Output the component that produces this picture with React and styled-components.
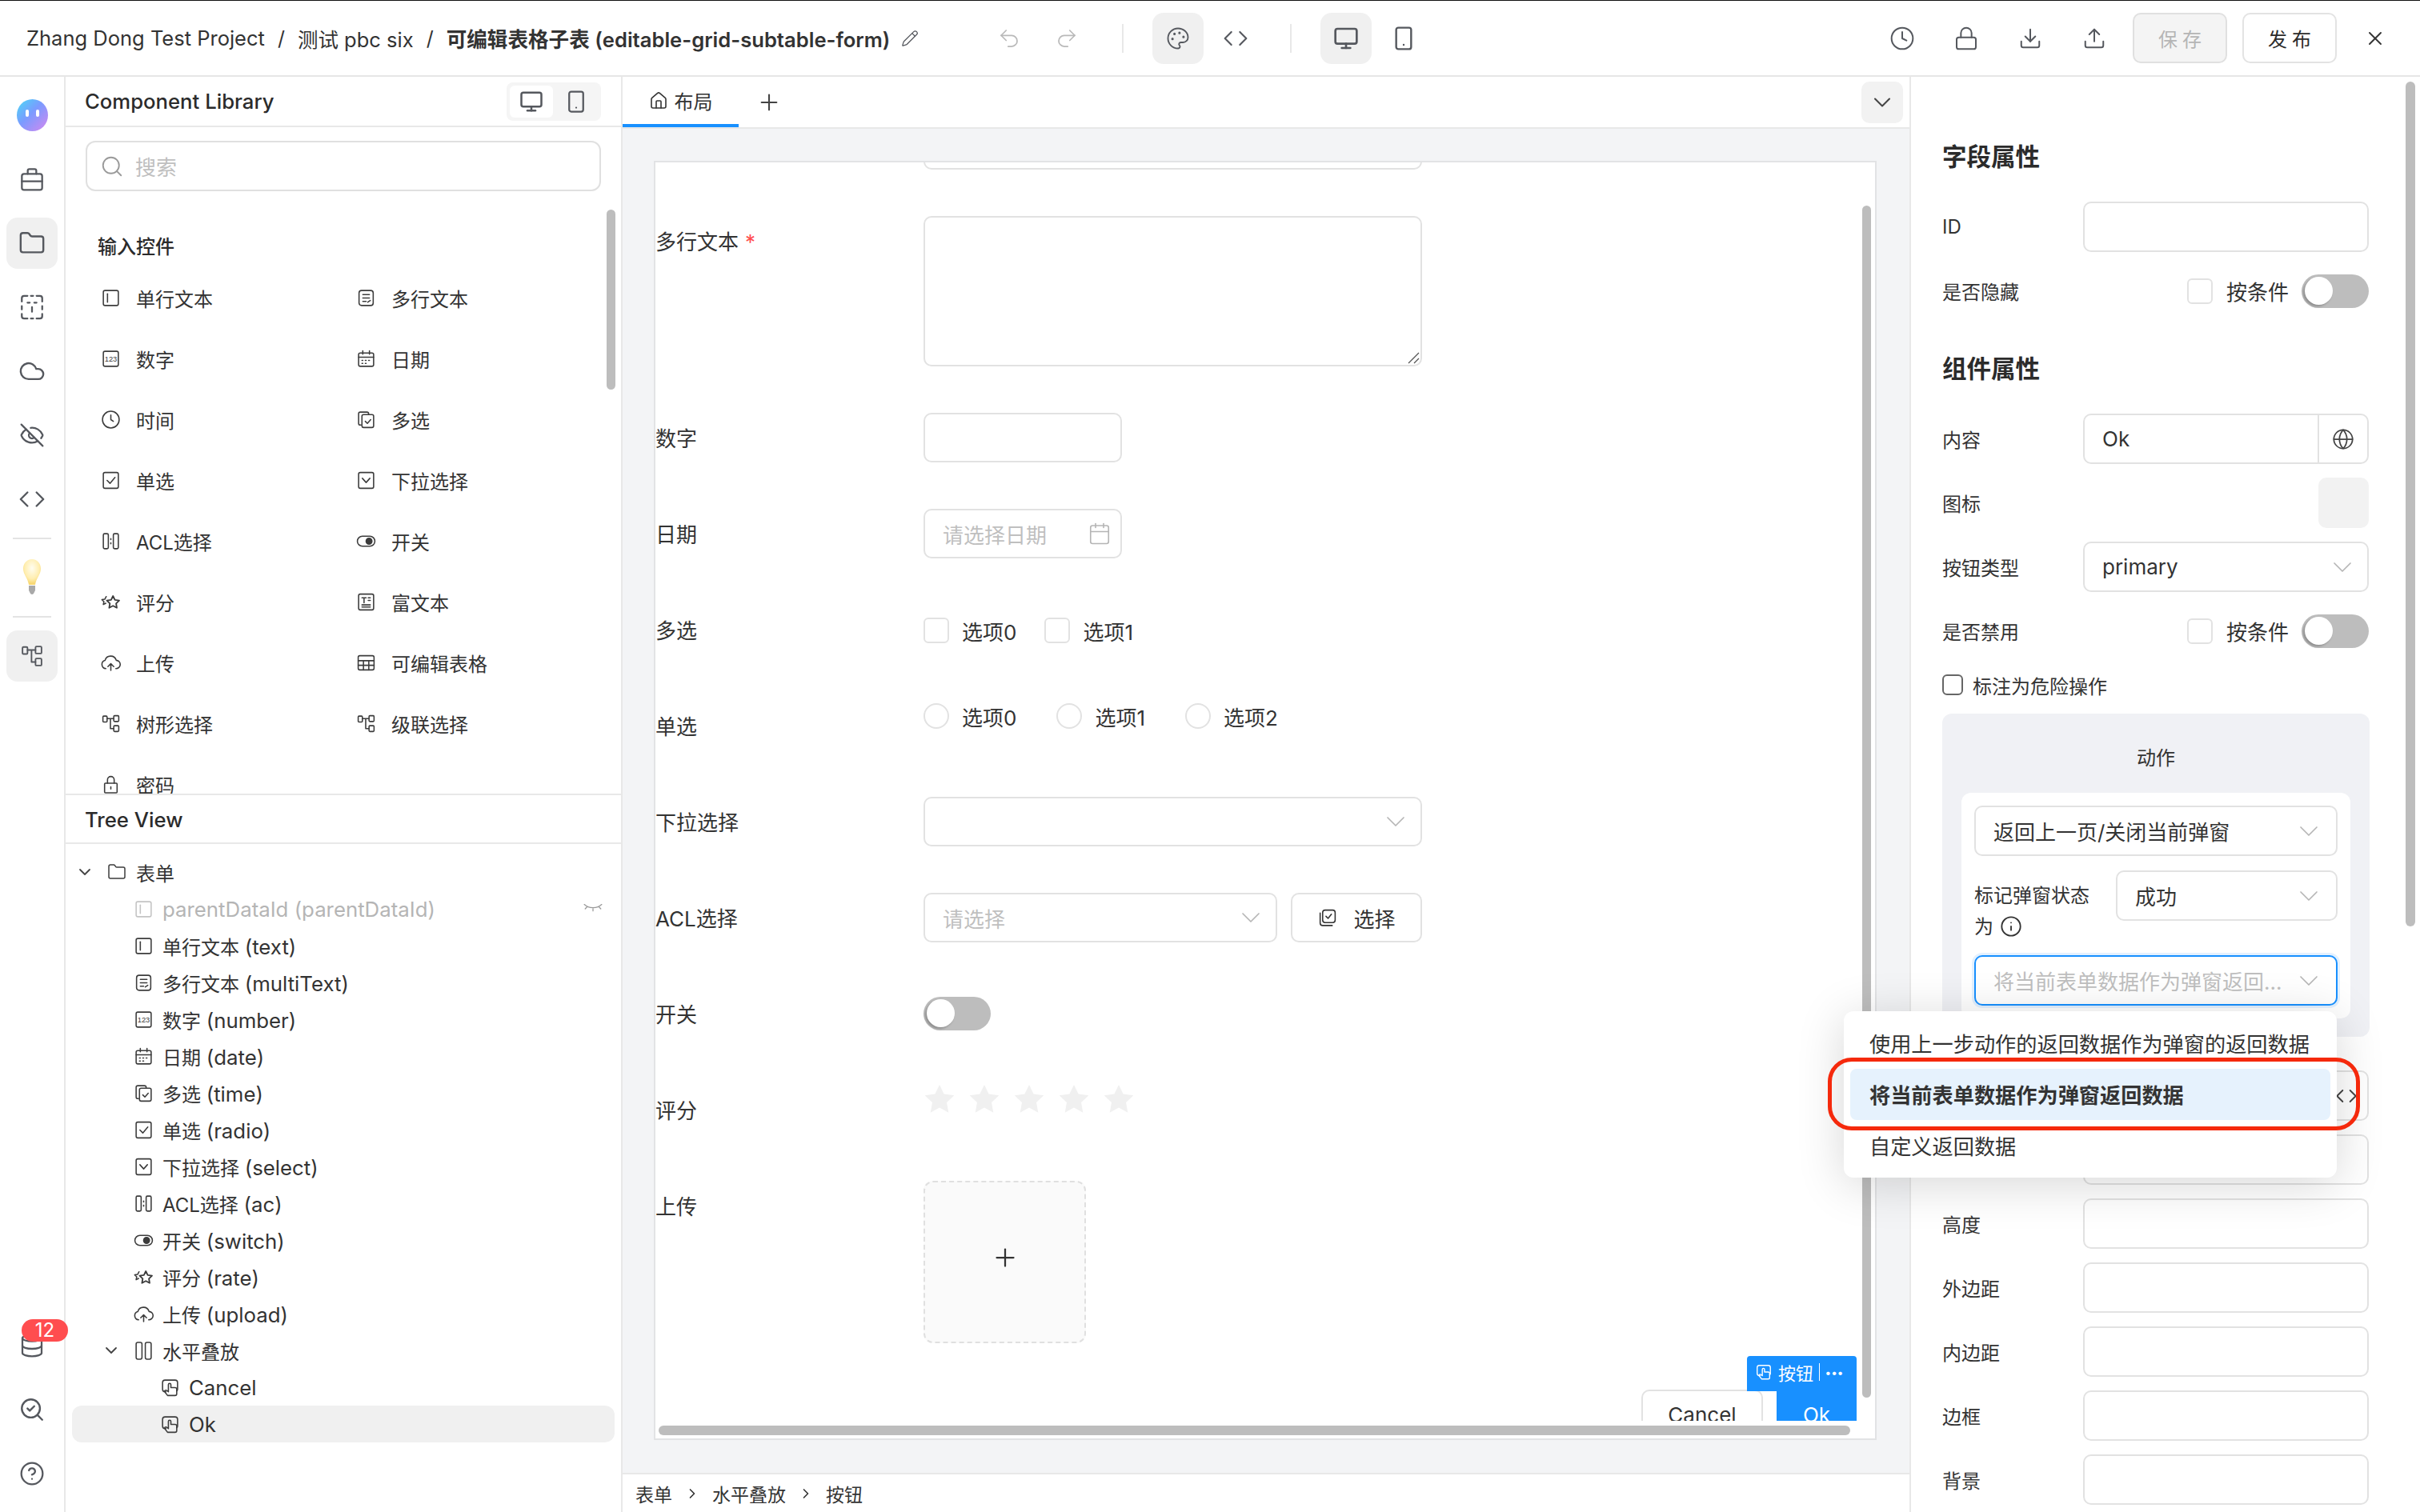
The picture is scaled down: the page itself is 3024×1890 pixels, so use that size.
import React from 'react';
import styled, { createGlobalStyle } from 'styled-components';
import {
  Folder, Cloud, EyeOff, Code, Database, SearchCheck, CircleHelp, Undo2, Redo2, Palette,
  Monitor, Smartphone, Pencil, Clock, Lock, Download, Upload, X, ChevronDown, ChevronRight, Plus,
  Home, Globe, Calendar, Info, Search,
} from 'lucide-react';

const FONT = `Inter, "Noto Sans CJK SC", "Noto Sans", sans-serif`;

const GlobalStyle = createGlobalStyle`
  html, body { margin: 0; padding: 0; background: #fff; }
  * { box-sizing: border-box; }
  body { font-family: ${FONT}; font-size: 24px; color: #333; }
`;

const Page = styled.div`
  position: relative;
  width: 3024px;
  height: 1890px;
  overflow: hidden;
  display: flex;
  flex-direction: column;
  border-top: 1px solid #111;
`;

/* top bar */
const Header = styled.header`
  height: 95px;
  flex: none;
  display: flex;
  align-items: center;
  padding: 0 0 0 33px;
  border-bottom: 2px solid #e6e6e6;
`;
const Crumb = styled.span`
  font-size: ${p => (p.$strong ? 25.6 : 25.5)}px;
  font-weight: ${p => (p.$strong ? 600 : 400)};
  color: #333;
  white-space: nowrap;
`;
const Slash = styled.span`
  font-size: 25px;
  margin: 0 16px;
  color: #333;
`;
const PlainIcon = styled.span`
  display: flex;
  align-items: center;
  justify-content: center;
  color: ${p => p.$color || '#55585e'};
  flex: none;
`;
const PencilIcon = styled(PlainIcon)`
  margin-left: 14px;
`;
const HistoryGroup = styled.div`
  display: flex;
  align-items: center;
  gap: 42px;
  margin-left: 98px;
`;
const VBar = styled.div`
  width: 2px;
  height: 36px;
  background: #e8e8e8;
  margin: 0 36px 0 ${p => p.$left || 36}px;
`;
const TopButton = styled.div`
  width: 64px;
  height: 64px;
  border-radius: 14px;
  display: flex;
  align-items: center;
  justify-content: center;
  color: #55585e;
  background: ${p => (p.$on ? '#f0f0f0' : 'transparent')};
`;
const ButtonPair = styled.div`
  display: flex;
  gap: 8px;
`;
const TopTools = styled.div`
  display: flex;
  align-items: center;
  gap: 16px;
  margin-left: auto;
  margin-right: 16px;
`;
const FlatButton = styled.div`
  width: 118px;
  height: 63px;
  border-radius: 10px;
  border: 2px solid ${p => (p.$disabled ? '#e0e0e0' : '#e3e3e3')};
  background: ${p => (p.$disabled ? '#f4f4f4' : '#fff')};
  color: ${p => (p.$disabled ? '#b5b5b5' : '#2b2b2b')};
  display: flex;
  align-items: center;
  justify-content: center;
  font-size: 24px;
  letter-spacing: 6px;
  padding-left: 6px;
`;
const ActionButtons = styled.div`
  display: flex;
  align-items: center;
  gap: 19px;
`;
const CloseIcon = styled(PlainIcon)`
  margin: 0 42px 0 34px;
  color: #333;
`;

const Body = styled.div`
  flex: 1;
  min-height: 0;
  display: flex;
`;

/* icon rail */
const Rail = styled.nav`
  width: 82px;
  flex: none;
  border-right: 2px solid #e8e8e8;
  display: flex;
  flex-direction: column;
  align-items: center;
  gap: 16px;
  padding: 16px 0 16px;
`;
const RailItem = styled.div`
  position: relative;
  width: 64px;
  height: 64px;
  border-radius: 14px;
  flex: none;
  display: flex;
  align-items: center;
  justify-content: center;
  color: #55585e;
  background: ${p => (p.$on ? '#f0f0f0' : 'transparent')};
`;
const RailLine = styled.div`
  width: 48px;
  height: 2px;
  flex: none;
  background: #e4e4e4;
`;
const RailBottom = styled.div`
  margin-top: auto;
  display: flex;
  flex-direction: column;
  gap: 16px;
`;
const Avatar = styled.div`
  width: 39px;
  height: 40px;
  border-radius: 50%;
  background: linear-gradient(135deg, #4fd3f7 5%, #7b9bff 45%, #c58bf2 90%);
  display: flex;
  justify-content: center;
  gap: 9px;
  padding-top: 13px;
`;
const AvatarEye = styled.span`
  width: 4px;
  height: 9px;
  border-radius: 2px;
  background: #fff;
`;
const CountBadge = styled.span`
  position: absolute;
  top: -1px;
  left: 19px;
  width: 58px;
  height: 28px;
  border-radius: 14px;
  background: #ff4d4f;
  color: #fff;
  font-size: 24px;
  line-height: 28px;
  text-align: center;
`;

/* left column */
const LeftPanel = styled.aside`
  width: 696px;
  flex: none;
  border-right: 2px solid #e8e8e8;
  display: flex;
  flex-direction: column;
`;
const PanelHead = styled.div`
  height: 63px;
  flex: none;
  display: flex;
  align-items: center;
  justify-content: space-between;
  padding: 0 25px 0 24px;
  border-bottom: 2px solid #e8e8e8;
`;
const PanelTitle = styled.h2`
  margin: 0;
  font-size: 25.7px;
  font-weight: 500;
  color: #2b2b2b;
`;
const Toggle = styled.div`
  width: 118px;
  height: 48px;
  padding: 4px;
  border-radius: 8px;
  background: #f5f5f5;
  display: flex;
  gap: 2px;
`;
const ToggleItem = styled.div`
  flex: 1;
  border-radius: 6px;
  display: flex;
  align-items: center;
  justify-content: center;
  color: #55585e;
  background: ${p => (p.$on ? '#fff' : 'transparent')};
`;
const Library = styled.div`
  position: relative;
  height: 835px;
  flex: none;
  overflow: hidden;
  padding-top: 17px;
  border-bottom: 2px solid #e8e8e8;
`;
const SearchBox = styled.div`
  height: 63px;
  margin: 0 25px;
  padding: 0 16px;
  border: 2px solid #e0e0e0;
  border-radius: 12px;
  display: flex;
  align-items: center;
  gap: 14px;
  color: #9a9a9a;
  font-size: 26px;
`;
const Placeholder = styled.span`
  color: #bfbfbf;
  white-space: nowrap;
`;
const SectionTitle = styled.div`
  margin: 46px 0 1px 40px;
  height: 48px;
  line-height: 48px;
  font-weight: 500;
  color: #2b2b2b;
`;
const WidgetGrid = styled.div`
  display: grid;
  grid-template-columns: 319px 1fr;
  grid-auto-rows: 76px;
  padding-left: 44px;
`;
const Widget = styled.div`
  display: flex;
  align-items: center;
  gap: 19px;
  color: #333;
  white-space: nowrap;
  & > svg { color: #3c3c3c; }
`;
const ScrollThumb = styled.div`
  position: absolute;
  top: ${p => p.$top}px;
  right: ${p => p.$right}px;
  width: ${p => p.$w}px;
  height: ${p => p.$h}px;
  border-radius: 6px;
  background: #bdbdbd;
`;
const TreeHead = styled.div`
  height: 61px;
  flex: none;
  display: flex;
  align-items: center;
  padding: 2px 24px 0;
  border-bottom: 2px solid #e8e8e8;
`;
const Tree = styled.div`
  padding-top: 12px;
`;
const TreeRow = styled.div`
  height: 46px;
  margin: 0 8px;
  padding-left: ${p => p.$level * 33}px;
  display: flex;
  align-items: center;
  gap: 12px;
  border-radius: 12px;
  color: ${p => (p.$muted ? '#b5b5b5' : '#333')};
  background: ${p => (p.$on ? '#f0f0f0' : 'transparent')};
  white-space: nowrap;
`;
const Latin = styled.span`
  font-size: 25.8px;
`;
const Caret = styled.span`
  width: 32px;
  flex: none;
  display: flex;
  justify-content: center;
  color: #444;
`;
const TreeIcon = styled.span`
  width: 24px;
  flex: none;
  display: flex;
  justify-content: center;
  color: ${p => (p.$muted ? '#c4c4c4' : '#3c3c3c')};
`;
const LeafPad = styled.span`
  width: 32px;
  flex: none;
`;
const RowEnd = styled.span`
  margin-left: auto;
  margin-right: 14px;
  display: flex;
  color: #9a9a9a;
`;

/* center */
const Center = styled.main`
  flex: 1;
  min-width: 0;
  display: flex;
  flex-direction: column;
`;
const TabBar = styled.div`
  height: 65px;
  flex: none;
  display: flex;
  align-items: center;
  border-bottom: 2px solid #e8e8e8;
`;
const Tab = styled.div`
  width: 145px;
  height: 63px;
  display: flex;
  align-items: center;
  justify-content: center;
  gap: 8px;
  color: #333;
  border-bottom: 4px solid #1890ff;
`;
const AddTab = styled(PlainIcon)`
  margin-left: 22px;
  color: #444;
`;
const CollapseButton = styled.div`
  margin-left: auto;
  margin-right: 8px;
  width: 52px;
  height: 52px;
  border-radius: 10px;
  background: #f2f2f2;
  color: #444;
  display: flex;
  align-items: center;
  justify-content: center;
`;
const CanvasArea = styled.div`
  flex: 1;
  min-height: 0;
  background: #f3f4f6;
  padding: 40px 41px 41px 39px;
  display: flex;
`;
const Canvas = styled.div`
  position: relative;
  flex: 1;
  background: #fff;
  border: 2px solid #e2e3e5;
  overflow: hidden;
`;
const FormView = styled.div`
  height: 1573px;
  overflow: hidden;
`;
const Form = styled.div`
  margin-top: -53px;
  display: flex;
  flex-direction: column;
  gap: 58px;
`;
const FormRow = styled.div`
  display: grid;
  grid-template-columns: 335px 623px;
`;
const FormLabel = styled.div`
  height: 62px;
  line-height: 65px;
  font-size: 26px;
  color: #333;
`;
const Required = styled.span`
  color: #ff4d4f;
  margin-left: 8px;
`;
const Field = styled.div`
  height: ${p => p.$h || 62}px;
  width: ${p => p.$w || '100%'};
  border: 2px solid #e2e2e2;
  border-radius: 10px;
  background: #fff;
  position: relative;
  display: flex;
  align-items: center;
  justify-content: space-between;
  padding: 0 11px 0 22px;
  flex: ${p => (p.$grow ? 1 : 'none')};
  font-size: 26px;
  color: #333;
  white-space: nowrap;
`;
const ResizeGrip = styled.svg`
  position: absolute;
  right: 1px;
  bottom: 1px;
`;
const ChoiceRow = styled.div`
  height: 32px;
  margin-top: ${p => p.$top}px;
  display: flex;
  align-items: center;
`;
const Choice = styled.div`
  display: flex;
  align-items: center;
  gap: 16px;
  margin-right: ${p => p.$gap}px;
  white-space: nowrap;
  font-size: 26px;
  color: #333;
`;
const Box = styled.span`
  width: ${p => p.$size || 32}px;
  height: ${p => p.$size || 32}px;
  flex: none;
  border: 2px solid ${p => (p.$dark ? '#666' : '#e2e2e2')};
  border-radius: ${p => (p.$round ? '50%' : '6px')};
  background: #fff;
`;
const Inline = styled.div`
  display: flex;
  gap: 17px;
`;
const PickButton = styled.div`
  width: 164px;
  height: 62px;
  border: 2px solid #e2e2e2;
  border-radius: 10px;
  display: flex;
  align-items: center;
  justify-content: center;
  gap: 20px;
  font-size: 26px;
  color: #333;
`;
const SwitchTrack = styled.div`
  width: 84px;
  height: 42px;
  margin-top: ${p => p.$top || 0}px;
  border-radius: 21px;
  background: #bdbdbd;
  padding: 3px 4px;
  flex: none;
`;
const SwitchKnob = styled.div`
  width: 35px;
  height: 35px;
  border-radius: 50%;
  background: #fff;
  box-shadow: -2px 2px 3px rgba(0, 0, 0, 0.25);
`;
const Stars = styled.div`
  display: flex;
  gap: 16px;
  margin-top: -2px;
  height: 40px;
`;
const UploadBox = styled.div`
  width: 203px;
  height: 203px;
  padding-bottom: 12px;
  border: 2px dashed #e0e0e0;
  border-radius: 12px;
  background: #fafafa;
  display: flex;
  align-items: center;
  justify-content: center;
  color: #333;
`;
const ButtonRow = styled.div`
  display: flex;
  justify-content: flex-end;
  gap: 17px;
  padding-right: 23px;
`;
const FormButton = styled.div`
  position: relative;
  width: ${p => p.$w}px;
  height: 62px;
  border: 2px solid ${p => (p.$primary ? '#1890ff' : '#e2e2e2')};
  border-radius: ${p => (p.$primary ? '0' : '10px')};
  background: ${p => (p.$primary ? '#1890ff' : '#fff')};
  color: ${p => (p.$primary ? '#fff' : '#333')};
  font-size: 26px;
  display: flex;
  align-items: center;
  justify-content: center;
`;
const SelectTag = styled.div`
  position: absolute;
  right: -2px;
  bottom: 100%;
  width: 137px;
  height: 44px;
  padding: 0 0 4px 10px;
  background: #1890ff;
  color: #fff;
  border-radius: 4px 4px 0 0;
  font-size: 22px;
  display: flex;
  align-items: center;
  gap: 7px;
  white-space: nowrap;
`;
const TagBar = styled.span`
  width: 1px;
  height: 22px;
  background: #fff;
`;
const TagDots = styled.span`
  font-size: 14px;
  letter-spacing: 1px;
  font-weight: 700;
`;
const HScroll = styled.div`
  position: absolute;
  left: 4px;
  bottom: 4px;
  width: 1489px;
  height: 12px;
  border-radius: 6px;
  background: #bdbdbd;
`;
const BreadBar = styled.div`
  height: 49px;
  flex: none;
  border-top: 2px solid #e8e8e8;
  display: flex;
  align-items: center;
  padding-left: 16px;
  font-size: 23px;
  color: #333;
`;
const BreadArrow = styled(PlainIcon)`
  margin: 0 15px;
  color: #333;
`;

/* right column */
const RightPanel = styled.aside`
  position: relative;
  width: 638px;
  flex: none;
  border-left: 2px solid #e8e8e8;
  padding: 34px 64px 0 39px;
  overflow: hidden;
`;
const PropTitle = styled.h3`
  margin: 42px 0 32px;
  height: 48px;
  line-height: 48px;
  font-size: 30.5px;
  font-weight: 600;
  color: #2b2b2b;
`;
const PropRow = styled.div`
  display: grid;
  grid-template-columns: 176px 1fr;
  align-items: center;
  height: 63px;
  margin-bottom: 17px;
  white-space: nowrap;
`;
const PropLabel = styled.span`
  color: #333;
`;
const RowRight = styled.div`
  display: flex;
  align-items: center;
  justify-content: flex-end;
`;
const ConditionText = styled.span`
  margin: 0 16px 0 17px;
  font-size: 26px;
  color: #333;
`;
const Addon = styled.span`
  position: absolute;
  right: 0;
  top: 0;
  bottom: 0;
  width: 62px;
  border-left: 2px solid #e2e2e2;
  display: flex;
  align-items: center;
  justify-content: center;
  color: #444;
`;
const IconSlot = styled.div`
  width: 63px;
  height: 63px;
  border-radius: 10px;
  background: #f2f2f2;
`;
const DangerRow = styled.div`
  height: 38px;
  margin-bottom: 17px;
  display: flex;
  align-items: center;
  gap: 12px;
  color: #333;
`;
const ActionPanel = styled.div`
  width: 534px;
  height: 404px;
  margin-bottom: 42px;
  padding: 32px 24px 23px 24px;
  border-radius: 12px;
  background: #f0f1f5;
`;
const ActionTitle = styled.div`
  height: 48px;
  line-height: 48px;
  text-align: center;
  margin-bottom: 19px;
  color: #333;
`;
const ActionCard = styled.div`
  height: 282px;
  padding: 16px;
  border-radius: 12px;
  background: #fff;
  display: flex;
  flex-direction: column;
`;
const Select = styled(Field)`
  height: 63px;
  padding: 0 14px 0 22px;
  flex: none;
  border-color: ${p => (p.$focus ? '#1890ff' : '#e2e2e2')};
  box-shadow: ${p => (p.$focus ? '0 0 0 3px #e3f1ff' : 'none')};
`;
const StatusRow = styled.div`
  display: grid;
  grid-template-columns: 177px 1fr;
  margin: 18px 0 16px;
`;
const StatusLabel = styled.div`
  padding-top: 12px;
  line-height: 39px;
  height: 90px;
  color: #333;
`;
const InfoIcon = styled.span`
  display: inline-flex;
  vertical-align: -5px;
  margin-left: 8px;
  color: #333;
`;
const SelectArrow = styled(PlainIcon)`
  color: #b5b5b5;
`;
const SuffixIcon = styled(PlainIcon)`
  margin-right: 1px;
  color: #444;
`;

/* dropdown over the property panel */
const Dropdown = styled.div`
  position: absolute;
  left: 2304px;
  top: 1263px;
  width: 616px;
  height: 208px;
  padding: 8px;
  border-radius: 12px;
  background: #fff;
  box-shadow: 0 8px 60px rgba(0, 0, 0, 0.16);
  display: flex;
  flex-direction: column;
`;
const DropItem = styled.div`
  height: 64px;
  padding-left: 24px;
  flex: none;
  display: flex;
  align-items: center;
  border-radius: 8px;
  font-size: 26.2px;
  font-weight: ${p => (p.$on ? 600 : 400)};
  background: ${p => (p.$on ? '#e6f2fd' : 'transparent')};
  color: #333;
  white-space: nowrap;
`;
const RedMark = styled.div`
  position: absolute;
  left: -20px;
  top: 58px;
  width: 665px;
  height: 91px;
  border: 5px solid #f5290c;
  border-radius: 30px;
  pointer-events: none;
`;

const Glyph = styled.svg`
  width: ${p => p.$size || 25}px;
  height: ${p => p.$size || 25}px;
  fill: none;
  stroke: currentColor;
  stroke-width: ${p => p.$weight || 1.5};
  stroke-linecap: round;
  stroke-linejoin: round;
  flex: none;
`;

const STAR = 'M8 1.5l1.9 3.9 4.3.6-3.1 3 .7 4.3L8 11.3l-3.8 2 .7-4.3-3.1-3 4.3-.6z';

const glyphs = {
  text: <><rect x="3" y="3" width="18" height="18" rx="2" /><path d="M8 7v10" /></>,
  multi: <><rect x="3.5" y="3" width="17" height="18" rx="3" /><path d="M8 8h8M8 12h8M8 16h4M14 17l3-2" /></>,
  number: <><rect x="3" y="3" width="18" height="18" rx="2" /><text x="12" y="15.5" fontSize="9" textAnchor="middle" fill="currentColor" stroke="none" fontFamily="Liberation Sans">123</text></>,
  date: <><rect x="3" y="5" width="18" height="16" rx="2" /><path d="M3 10h18M8 2.5v4M16 2.5v4M7 14h1M11 14h1M15 14h1M7 17.5h1M11 17.5h1" /></>,
  clock: <><circle cx="12" cy="12" r="10" /><path d="M12 6.5V12l3 2" /></>,
  multiCheck: <><path d="M6 18.5H5a2 2 0 0 1-2-2V5a2 2 0 0 1 2-2h8a2 2 0 0 1 2 2v1" /><rect x="7" y="6" width="14" height="15.5" rx="2" /><path d="M11 14l2.5 2.5 4-4.5" /></>,
  radio: <><rect x="3" y="2.5" width="18" height="19" rx="2" /><path d="M7.5 12l3.5 3.5 6-7" /></>,
  select: <><rect x="3" y="2.5" width="18" height="19" rx="2" /><path d="M7.5 9.5L12 14.5l4.5-5" /></>,
  acl: <><rect x="3" y="3" width="6" height="18" rx="1.5" /><rect x="15" y="3" width="6" height="18" rx="1.5" /><path d="M12 9v1M12 14v1" /></>,
  toggle: <><rect x="1.5" y="6" width="21" height="12" rx="6" /><circle cx="15.5" cy="12" r="3.5" fill="currentColor" /></>,
  rate: <><path d={STAR} transform="translate(5 3) scale(1.2)" /><path d="M6 13.5L3 15l.7-3.5-2.4-2.3 3.4-.5L6.5 5.5" /></>,
  rich: <><rect x="3" y="2.5" width="18" height="19" rx="2" /><path d="M7 7h5M9.5 7v6M14.5 7H17M14.5 10H17M7 15.5h10M7 18h10" /></>,
  cloudUp: <><path d="M12 13v8M8.5 16.5L12 13l3.5 3.5" /><path d="M6 19a5 5 0 0 1-1-9.8A7 7 0 0 1 18.5 9 5 5 0 0 1 18 19" /></>,
  table: <><rect x="2.5" y="3.5" width="19" height="17" rx="2" /><path d="M2.5 9.5h19M2.5 15h19M8.8 9.5v11M15.2 9.5v11" /></>,
  tree: <><rect x="2.5" y="3" width="5" height="7" rx="1" /><rect x="15.5" y="2.5" width="6" height="7" rx="1" /><rect x="15.5" y="14.5" width="6" height="7" rx="1" /><path d="M7.5 6h8M11.5 6v12h4" /></>,
  lock: <><rect x="4.5" y="10.5" width="15" height="11.5" rx="1" /><path d="M8 10.5V6.5a4 4 0 0 1 8 0v4M12 15v2.5" /></>,
  hstack: <><rect x="3" y="2" width="7" height="20" rx="2" /><rect x="14" y="2" width="7" height="20" rx="2" /></>,
  button: <><path d="M7 17H6a3 3 0 0 1-3-3V6a3 3 0 0 1 3-3h12a3 3 0 0 1 3 3v8a3 3 0 0 1-1 2" /><path d="M9 21.5l-3-4a1.4 1.4 0 0 1 2-2l2 1.5V8.5a1.5 1.5 0 0 1 3 0V12h5a2 2 0 0 1 2 2v5.5a2 2 0 0 1-2 2z" /></>,
  lash: <><path d="M2 7c5 5 15 5 20 0M5 10l-2 2M12 12v2.5M19 10l2 2" /></>,
  pick: <><path d="M3.5 6v12a3 3 0 0 0 3 3H18" /><rect x="6.5" y="2.5" width="15" height="15" rx="3" /><path d="M10.5 10l2.5 2.5 4-5" /></>,
  case: <><rect x="2.5" y="7" width="19" height="15" rx="2" /><path d="M2.5 14h19M8 7V4a1.5 1.5 0 0 1 1.5-1.5h5A1.5 1.5 0 0 1 16 4v3" /></>,
  dashed: <><path d="M3 7V4a2 2 0 0 1 2-2h3M11 2h2M16 2h3a2 2 0 0 1 2 2v3M3 11v3M21 11v3M3 18v2a2 2 0 0 0 2 2h3M11 22h2M16 22h3a2 2 0 0 0 2-2v-2M8 8h2M14 8h2M12 12v4" /></>,
};

const Ico = ({ name, size, weight }) => (
  <Glyph viewBox="0 0 24 24" $size={size} $weight={weight}>{glyphs[name]}</Glyph>
);

const Bulb = () => (
  <svg width="26" height="48" viewBox="0 0 26 48">
    <defs>
      <radialGradient id="bulbGlow" cx="50%" cy="35%" r="60%">
        <stop offset="0%" stopColor="#fffdf0" />
        <stop offset="70%" stopColor="#ffeeb0" />
        <stop offset="100%" stopColor="#f8d873" />
      </radialGradient>
    </defs>
    <path d="M13 1C6 1 2 7 2 13c0 7 6 12 7 20h8c1-8 7-13 7-20C24 7 20 1 13 1z" fill="url(#bulbGlow)" />
    <path d="M9 34h8v6l-2 4a3 3 0 0 1-4 0l-2-4z" fill="#a9a9a9" />
  </svg>
);

const ArrowDown = () => (
  <SelectArrow><ChevronDown size={40} strokeWidth={1} /></SelectArrow>
);

const Star = () => (
  <svg width="40" height="40" viewBox="0 0 40 40">
    <path d="M20 2l5.6 11.6 12.7 1.7-9.3 8.8 2.3 12.6L20 30.6 8.7 36.7 11 24.1 1.7 15.3l12.7-1.7z" fill="#f0f0f0" />
  </svg>
);

const WIDGETS = [
  ['text', '单行文本'], ['multi', '多行文本'], ['number', '数字'], ['date', '日期'],
  ['clock', '时间'], ['multiCheck', '多选'], ['radio', '单选'], ['select', '下拉选择'],
  ['acl', 'ACL选择'], ['toggle', '开关'], ['rate', '评分'], ['rich', '富文本'],
  ['cloudUp', '上传'], ['table', '可编辑表格'], ['tree', '树形选择'], ['tree', '级联选择'],
  ['lock', '密码'],
];

const TREE_FIELDS = [
  ['text', '单行文本', '(text)'], ['multi', '多行文本', '(multiText)'], ['number', '数字', '(number)'],
  ['date', '日期', '(date)'], ['multiCheck', '多选', '(time)'], ['radio', '单选', '(radio)'],
  ['select', '下拉选择', '(select)'], ['acl', 'ACL选择', '(ac)'], ['toggle', '开关', '(switch)'],
  ['rate', '评分', '(rate)'], ['cloudUp', '上传', '(upload)'],
];

const STYLE_ROWS = ['', '', '高度', '外边距', '内边距', '边框', '背景'];

const Condition = () => (
  <RowRight>
    <Box />
    <ConditionText>按条件</ConditionText>
    <SwitchTrack><SwitchKnob /></SwitchTrack>
  </RowRight>
);

export default function App() {
  return (
    <Page>
      <GlobalStyle />
      <Header>
        <Crumb>Zhang Dong Test Project</Crumb>
        <Slash>/</Slash>
        <Crumb>测试 pbc six</Crumb>
        <Slash>/</Slash>
        <Crumb $strong>可编辑表格子表 (editable-grid-subtable-form)</Crumb>
        <PencilIcon><Pencil size={22} strokeWidth={1.4} /></PencilIcon>
        <HistoryGroup>
          <PlainIcon $color="#b9b9b9"><Undo2 size={30} strokeWidth={1.4} /></PlainIcon>
          <PlainIcon $color="#b9b9b9"><Redo2 size={30} strokeWidth={1.4} /></PlainIcon>
        </HistoryGroup>
        <VBar $left={54} />
        <ButtonPair>
          <TopButton $on><Palette size={30} strokeWidth={1.5} /></TopButton>
          <TopButton><Code size={32} strokeWidth={1.6} /></TopButton>
        </ButtonPair>
        <VBar />
        <ButtonPair>
          <TopButton $on><Monitor size={32} strokeWidth={2} /></TopButton>
          <TopButton><Smartphone size={32} strokeWidth={1.8} /></TopButton>
        </ButtonPair>
        <TopTools>
          <TopButton><Clock size={32} strokeWidth={1.5} /></TopButton>
          <TopButton><Lock size={32} strokeWidth={1.5} /></TopButton>
          <TopButton><Download size={30} strokeWidth={1.6} /></TopButton>
          <TopButton><Upload size={30} strokeWidth={1.6} /></TopButton>
        </TopTools>
        <ActionButtons>
          <FlatButton $disabled>保存</FlatButton>
          <FlatButton>发布</FlatButton>
        </ActionButtons>
        <CloseIcon><X size={28} strokeWidth={1.6} /></CloseIcon>
      </Header>

      <Body>
        <Rail>
          <RailItem><Avatar><AvatarEye /><AvatarEye /></Avatar></RailItem>
          <RailItem><Ico name="case" size={32} weight={1.7} /></RailItem>
          <RailItem $on><Folder size={34} strokeWidth={1.7} /></RailItem>
          <RailItem><Ico name="dashed" size={34} weight={1.6} /></RailItem>
          <RailItem><Cloud size={34} strokeWidth={1.7} /></RailItem>
          <RailItem><EyeOff size={32} strokeWidth={1.7} /></RailItem>
          <RailItem><Code size={34} strokeWidth={1.7} /></RailItem>
          <RailLine />
          <RailItem><Bulb /></RailItem>
          <RailLine />
          <RailItem $on><Ico name="tree" size={30} /></RailItem>
          <RailBottom>
            <RailItem>
              <Database size={32} strokeWidth={1.7} />
              <CountBadge>12</CountBadge>
            </RailItem>
            <RailItem><SearchCheck size={34} strokeWidth={1.7} /></RailItem>
            <RailItem><CircleHelp size={32} strokeWidth={1.7} /></RailItem>
          </RailBottom>
        </Rail>

        <LeftPanel>
          <PanelHead>
            <PanelTitle>Component Library</PanelTitle>
            <Toggle>
              <ToggleItem $on><Monitor size={30} strokeWidth={2} /></ToggleItem>
              <ToggleItem><Smartphone size={30} strokeWidth={1.8} /></ToggleItem>
            </Toggle>
          </PanelHead>
          <Library>
            <SearchBox>
              <Search size={30} strokeWidth={1.5} />
              <Placeholder>搜索</Placeholder>
            </SearchBox>
            <SectionTitle>输入控件</SectionTitle>
            <WidgetGrid>
              {WIDGETS.map(([icon, label]) => (
                <Widget key={label}><Ico name={icon} />{label}</Widget>
              ))}
            </WidgetGrid>
            <ScrollThumb $top={103} $right={7} $w={11} $h={225} />
          </Library>
          <TreeHead><PanelTitle>Tree View</PanelTitle></TreeHead>
          <Tree>
            <TreeRow $level={0}>
              <Caret><ChevronDown size={24} strokeWidth={1.8} /></Caret>
              <TreeIcon><Folder size={26} strokeWidth={1.5} /></TreeIcon>
              表单
            </TreeRow>
            <TreeRow $level={1} $muted>
              <LeafPad />
              <TreeIcon $muted><Ico name="text" /></TreeIcon>
              <Latin>parentDataId (parentDataId)</Latin>
              <RowEnd><Ico name="lash" size={26} weight={1.2} /></RowEnd>
            </TreeRow>
            {TREE_FIELDS.map(([icon, label, key]) => (
              <TreeRow $level={1} key={key}>
                <LeafPad />
                <TreeIcon><Ico name={icon} /></TreeIcon>
                <span>{label} <Latin>{key}</Latin></span>
              </TreeRow>
            ))}
            <TreeRow $level={1}>
              <Caret><ChevronDown size={24} strokeWidth={1.8} /></Caret>
              <TreeIcon><Ico name="hstack" /></TreeIcon>
              水平叠放
            </TreeRow>
            <TreeRow $level={2}>
              <LeafPad />
              <TreeIcon><Ico name="button" /></TreeIcon>
              <Latin>Cancel</Latin>
            </TreeRow>
            <TreeRow $level={2} $on>
              <LeafPad />
              <TreeIcon><Ico name="button" /></TreeIcon>
              <Latin>Ok</Latin>
            </TreeRow>
          </Tree>
        </LeftPanel>

        <Center>
          <TabBar>
            <Tab><Home size={24} strokeWidth={1.6} />布局</Tab>
            <AddTab><Plus size={32} strokeWidth={1.6} /></AddTab>
            <CollapseButton><ChevronDown size={36} strokeWidth={1.4} /></CollapseButton>
          </TabBar>
          <CanvasArea>
            <Canvas>
              <FormView>
                <Form>
                  <FormRow><FormLabel /><Field /></FormRow>
                  <FormRow>
                    <FormLabel>多行文本<Required>*</Required></FormLabel>
                    <Field $h={188}>
                      <ResizeGrip width="16" height="16" viewBox="0 0 16 16" fill="none" stroke="#555" strokeWidth="1.3">
                        <path d="M2 15L15 2M9 15l6-6" />
                      </ResizeGrip>
                    </Field>
                  </FormRow>
                  <FormRow>
                    <FormLabel>数字</FormLabel>
                    <Field $w="248px" />
                  </FormRow>
                  <FormRow>
                    <FormLabel>日期</FormLabel>
                    <Field $w="248px">
                      <Placeholder>请选择日期</Placeholder>
                      <SelectArrow><Calendar size={30} strokeWidth={1.3} /></SelectArrow>
                    </Field>
                  </FormRow>
                  <FormRow>
                    <FormLabel>多选</FormLabel>
                    <ChoiceRow $top={16}>
                      <Choice $gap={35}><Box />选项0</Choice>
                      <Choice $gap={0}><Box />选项1</Choice>
                    </ChoiceRow>
                  </FormRow>
                  <FormRow>
                    <FormLabel>单选</FormLabel>
                    <ChoiceRow $top={3}>
                      <Choice $gap={50}><Box $round />选项0</Choice>
                      <Choice $gap={50}><Box $round />选项1</Choice>
                      <Choice $gap={0}><Box $round />选项2</Choice>
                    </ChoiceRow>
                  </FormRow>
                  <FormRow>
                    <FormLabel>下拉选择</FormLabel>
                    <Field><span /><ArrowDown /></Field>
                  </FormRow>
                  <FormRow>
                    <FormLabel>ACL选择</FormLabel>
                    <Inline>
                      <Field $grow $w="auto"><Placeholder>请选择</Placeholder><ArrowDown /></Field>
                      <PickButton><Ico name="pick" />选择</PickButton>
                    </Inline>
                  </FormRow>
                  <FormRow>
                    <FormLabel>开关</FormLabel>
                    <SwitchTrack $top={10}><SwitchKnob /></SwitchTrack>
                  </FormRow>
                  <FormRow>
                    <FormLabel>评分</FormLabel>
                    <Stars>{[0, 1, 2, 3, 4].map(i => <Star key={i} />)}</Stars>
                  </FormRow>
                  <FormRow>
                    <FormLabel>上传</FormLabel>
                    <UploadBox><Plus size={36} strokeWidth={1.5} /></UploadBox>
                  </FormRow>
                  <ButtonRow>
                    <FormButton $w={152}>Cancel</FormButton>
                    <FormButton $w={100} $primary>
                      Ok
                      <SelectTag>
                        <Ico name="button" size={22} />
                        按钮
                        <TagBar />
                        <TagDots>•••</TagDots>
                      </SelectTag>
                    </FormButton>
                  </ButtonRow>
                </Form>
              </FormView>
              <ScrollThumb $top={54} $right={5} $w={11} $h={1490} />
              <HScroll />
            </Canvas>
          </CanvasArea>
          <BreadBar>
            表单
            <BreadArrow><ChevronRight size={20} strokeWidth={2} /></BreadArrow>
            水平叠放
            <BreadArrow><ChevronRight size={20} strokeWidth={2} /></BreadArrow>
            按钮
          </BreadBar>
        </Center>

        <RightPanel>
          <PropTitle>字段属性</PropTitle>
          <PropRow><PropLabel>ID</PropLabel><Field $h={63} /></PropRow>
          <PropRow><PropLabel>是否隐藏</PropLabel><Condition /></PropRow>
          <PropTitle>组件属性</PropTitle>
          <PropRow>
            <PropLabel>内容</PropLabel>
            <Field $h={63}>Ok<Addon><Globe size={28} strokeWidth={1.5} /></Addon></Field>
          </PropRow>
          <PropRow>
            <PropLabel>图标</PropLabel>
            <RowRight><IconSlot /></RowRight>
          </PropRow>
          <PropRow>
            <PropLabel>按钮类型</PropLabel>
            <Field $h={63}>primary<ArrowDown /></Field>
          </PropRow>
          <PropRow><PropLabel>是否禁用</PropLabel><Condition /></PropRow>
          <DangerRow><Box $size={26} $dark />标注为危险操作</DangerRow>
          <ActionPanel>
            <ActionTitle>动作</ActionTitle>
            <ActionCard>
              <Select>返回上一页/关闭当前弹窗<ArrowDown /></Select>
              <StatusRow>
                <StatusLabel>
                  标记弹窗状态<br />为
                  <InfoIcon><Info size={28} strokeWidth={1.6} /></InfoIcon>
                </StatusLabel>
                <Select>成功<ArrowDown /></Select>
              </StatusRow>
              <Select $focus>
                <Placeholder>将当前表单数据作为弹窗返回...</Placeholder>
                <ArrowDown />
              </Select>
            </ActionCard>
          </ActionPanel>
          {STYLE_ROWS.map((label, i) => (
            <PropRow key={i}>
              <PropLabel>{label}</PropLabel>
              <Field $h={63}>
                {i === 0 && <><span /><SuffixIcon><Code size={28} strokeWidth={1.6} /></SuffixIcon></>}
              </Field>
            </PropRow>
          ))}
          <ScrollThumb $top={6} $right={6} $w={12} $h={1056} />
        </RightPanel>
      </Body>

      <Dropdown>
        <DropItem>使用上一步动作的返回数据作为弹窗的返回数据</DropItem>
        <DropItem $on>将当前表单数据作为弹窗返回数据</DropItem>
        <DropItem>自定义返回数据</DropItem>
        <RedMark />
      </Dropdown>
    </Page>
  );
}
